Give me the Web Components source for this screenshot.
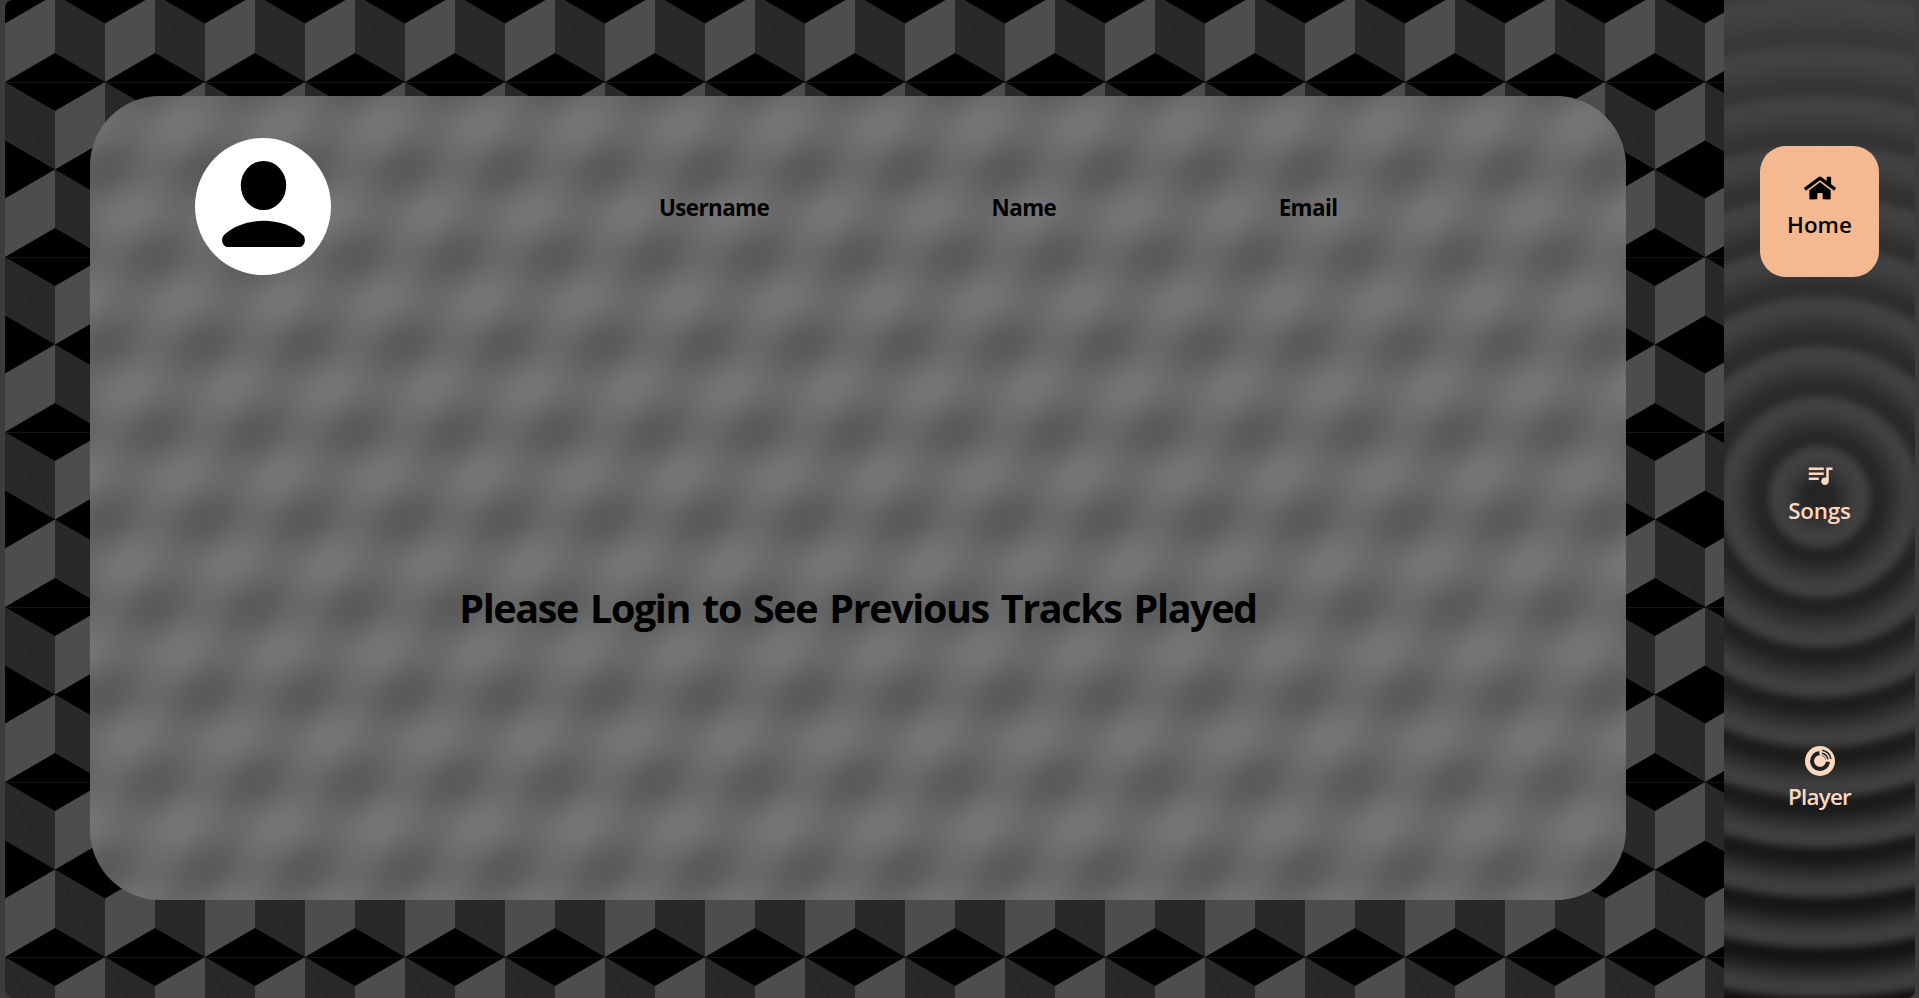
<!DOCTYPE html>
<html lang="en">
<head>
<meta charset="utf-8">
<title>Profile</title>
<style>
html,body{height:100%;margin:0}
body{background:#3c3c3c;overflow:hidden;font-family:"Segoe UI","Open Sans","Noto Sans",sans-serif;color:#000}
</style>
</head>
<body>
<app-shell>
  <profile-card slot="main">
    <user-avatar slot="avatar"></user-avatar>
    <profile-field slot="fields">Username</profile-field>
    <profile-field slot="fields">Name</profile-field>
    <profile-field slot="fields">Email</profile-field>
    <span slot="message">Please Login to See Previous Tracks Played</span>
  </profile-card>
  <side-bar slot="side">
    <nav-item active>
      <svg slot="icon" width="32" height="26" viewBox="0 0 576 512" preserveAspectRatio="none"><path d="M280.37 148.26L96 300.11V464a16 16 0 0 0 16 16l112.06-.29a16 16 0 0 0 15.92-16V368a16 16 0 0 1 16-16h64a16 16 0 0 1 16 16v95.64a16 16 0 0 0 16 16.05L464 480a16 16 0 0 0 16-16V300L295.67 148.26a12.19 12.19 0 0 0-15.3 0zM571.6 251.47L488 182.56V44.05a12 12 0 0 0-12-12h-56a12 12 0 0 0-12 12v72.61L318.47 43a48 48 0 0 0-61 0L4.34 251.47a12 12 0 0 0-1.6 16.9l25.5 31A12 12 0 0 0 45.15 301l235.22-193.74a12.19 12.19 0 0 1 15.3 0L530.9 301a12 12 0 0 0 16.9-1.6l25.5-31a12 12 0 0 0-1.7-16.93z"/></svg>
      Home</nav-item>
    <nav-item style="letter-spacing:-.2px">
      <svg slot="icon" width="30" height="30" viewBox="0 0 24 24"><path d="M15 6H3v2h12V6zm0 4H3v2h12v-2zM3 16h8v-2H3v2zM17 6v8.18c-.31-.11-.65-.18-1-.18-1.66 0-3 1.34-3 3s1.34 3 3 3 3-1.34 3-3V8h3V6h-5z"/></svg>
      Songs</nav-item>
    <nav-item style="letter-spacing:-.75px">
      <svg slot="icon" width="30" height="30" viewBox="0 0 30 30"><circle cx="15" cy="15" r="15"/><g fill="none" stroke="#202020"><path d="M14.5 7.1A7.9 7.9 0 1 0 22.9 15.8" stroke-width="4.2"/><path d="M17.2 4.2A11 11 0 0 1 26 13" stroke-width="1.5"/><path d="M16.9 7.2A8 8 0 0 1 23 13.3" stroke-width="1.5"/><path d="M16.3 10A5.6 5.6 0 0 1 20.2 13.9" stroke-width="1.5"/></g><circle cx="15" cy="15" r="5.6"/></svg>
      Player</nav-item>
  </side-bar>
</app-shell>
<script>
const define=(name,html)=>customElements.define(name,class extends HTMLElement{
  constructor(){super();this.attachShadow({mode:'open'}).innerHTML=html;}
});
define('cube-pattern',`<style>:host{display:block}svg{display:block;width:100%;height:100%}</style>
<svg aria-hidden="true"><defs><pattern id="cubes" width="100" height="175" y="82" patternUnits="userSpaceOnUse">
<rect width="100" height="175" fill="#000"/>
<path fill="#29292b" d="M0 0L50 29V87.5L0 58.5ZM50 87.5L100 116.5V175L50 146Z"/>
<path fill="#4d4d4f" d="M50 29L100 0V58.5L50 87.5ZM0 116.5L50 87.5V146L0 175Z"/>
<path stroke="#151517" stroke-width=".8" stroke-dasharray="1.2 1" d="M0 0L50 87.5L100 175" fill="none"/>
<path stroke="#151515" stroke-width="1" d="M0 .5H100"/>
</pattern></defs><rect width="100%" height="100%" fill="url(#cubes)"/></svg>`);
define('app-shell',`<style>
:host{display:grid;grid-template-columns:1719px 191px;height:998px;width:1910px;margin-left:5px;border-radius:8px;overflow:hidden}
main{display:grid;min-width:0}
cube-pattern,.content{grid-area:1/1;min-width:0}
.content{padding:96px 98px 98px 85px;display:grid}
</style><main><cube-pattern></cube-pattern><div class="content"><slot name="main"></slot></div></main><slot name="side"></slot>`);
define('profile-card',`<style>
:host{display:flex;flex-direction:column;position:relative;isolation:isolate;border-radius:70px;overflow:hidden}
/* frosted copy of the wallpaper, aligned with the one behind the card */
.frost{position:absolute;z-index:-2;left:-85px;top:-96px;width:1719px;height:998px;filter:blur(20px)}
.tint{position:absolute;z-index:-1;inset:0;background:rgba(255,255,255,.3)}
header{display:flex;align-items:center;padding:41px 0 0 105px;height:138px}
.fields{display:flex;margin:4px 0 0 328px;gap:222.5px}
.msg{text-align:center;margin-top:305px;font-weight:700;font-size:39.5px;line-height:56px;white-space:nowrap;letter-spacing:-1.4px;word-spacing:3.2px}
</style><cube-pattern class="frost"></cube-pattern><div class="tint"></div><header><slot name="avatar"></slot><div class="fields"><slot name="fields"></slot></div></header><div class="msg"><slot name="message"></slot></div>`);
define('user-avatar',`<style>:host{display:block;width:136px;height:137px;flex:none;border-radius:50%;background:#fff}svg{display:block}</style>
<svg width="136" height="137" viewBox="0 0 136 137"><ellipse cx="68.5" cy="47.5" rx="22.7" ry="24.5"/><path d="M33 109C28 109 25 102 29 97C49 78 88 78 108 97C112 102 109 109 104 109Z"/></svg>`);
define('profile-field',`<style>:host{display:block;font-weight:700;font-size:22.4px;line-height:30px;letter-spacing:-.6px}</style><slot></slot>`);
define('side-bar',`<style>
:host{display:flex;flex-direction:column;align-items:center;gap:155px;padding-top:146px;height:852px;background:
radial-gradient(circle at 95.5px 497px,rgba(36,36,37,.9) 0,rgba(36,36,37,.8) 8px,transparent 22px),
repeating-radial-gradient(circle at 95.5px 497px,rgba(68,68,70,.5) 0,rgba(68,68,70,.16) 4px,rgba(68,68,70,.02) 8px,rgba(68,68,70,.08) 14px,rgba(68,68,70,.45) 25px,rgba(68,68,70,.78) 35px,rgba(68,68,70,.88) 41px,rgba(68,68,70,.8) 46px,rgba(68,68,70,.5) 50px),linear-gradient(#39393a,#111)}
</style><slot></slot>`);
define('nav-item',`<style>
:host{display:flex;flex-direction:column;align-items:center;box-sizing:border-box;width:119px;height:131px;padding-top:26px;border-radius:26px;color:#fbd9c0;fill:currentColor;font-size:22.4px;font-weight:600;line-height:30px}
:host([active]){background:#f4b990;color:#000}
.icon{height:32px;display:flex;align-items:center;justify-content:center;margin-bottom:6px}
:host(:not([active])) .icon{padding-top:1px;margin-bottom:5px}
</style><div class="icon"><slot name="icon"></slot></div><div><slot></slot></div>`);
</script>
</body>
</html>
